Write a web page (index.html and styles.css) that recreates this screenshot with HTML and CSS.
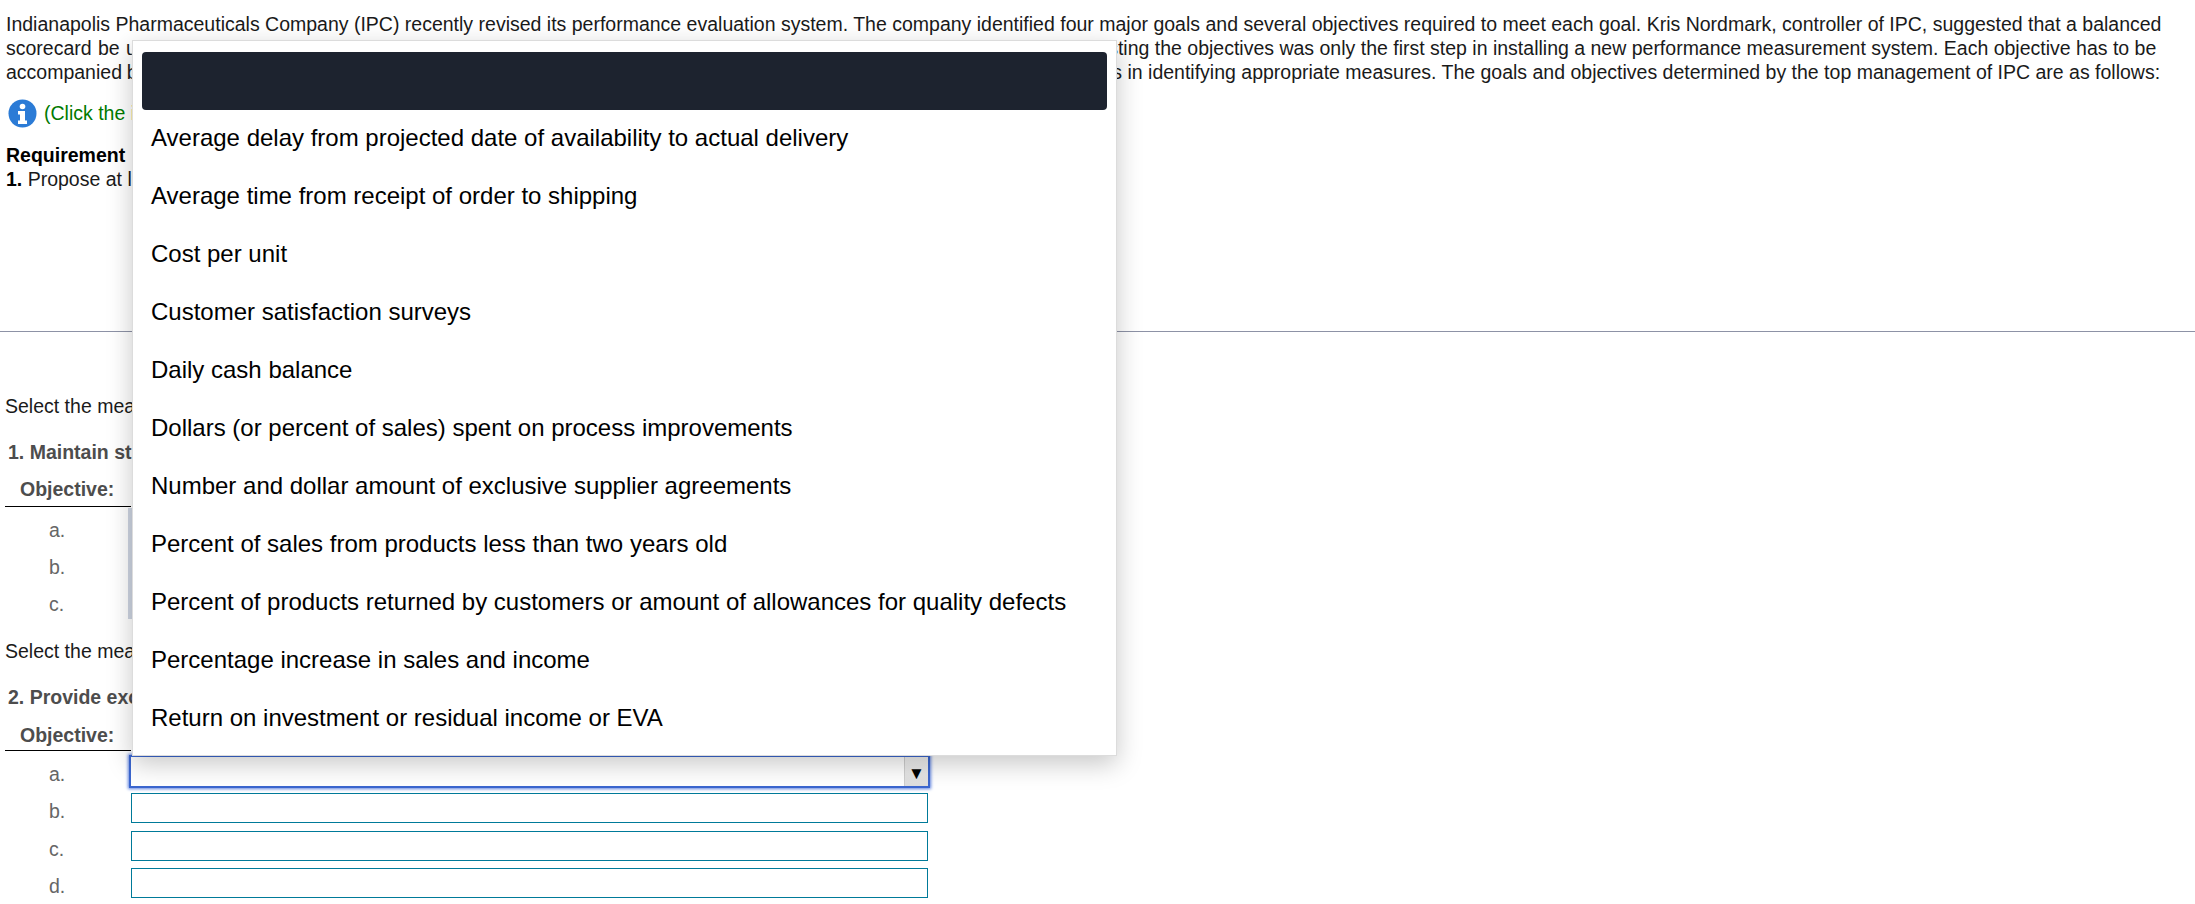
FILE: index.html
```html
<!DOCTYPE html>
<html lang="en">
<head>
<meta charset="utf-8">
<title>Balanced scorecard</title>
<link rel="stylesheet" href="styles.css">
</head>
<body>
<section class="question">
  <p class="intro">Indianapolis Pharmaceuticals Company (IPC) recently revised its performance evaluation system. The company identified four major goals and several objectives required to meet each goal. Kris Nordmark, controller of IPC, suggested that a balanced<br><span class="fit-wide">scorecard be used to report on top management's progress toward achieving the company's goals. He also emphasized that listing</span> the objectives was only the first step in installing a new performance measurement system. Each objective has to be<br><span class="fit-narrow">accompanied by one or more measures that should indicate whether each objective is being achieved. He asked staff to give ideas</span> in identifying appropriate measures. The goals and objectives determined by the top management of IPC are as follows:</p>
  <div class="hint">
    <svg class="info" viewBox="0 0 29 29" aria-hidden="true">
      <circle cx="14.5" cy="14.5" r="14" fill="#2b7bd6"/>
      <circle cx="14.5" cy="7.500" r="2.800" fill="#fff"/>
      <path d="M10 12h7v9.500h2V25H10v-3.500h2V15.500h-2z" fill="#fff"/>
    </svg>
    <span>(Click the icon to view the goals and objectives.)</span>
  </div>
  <p class="req"><b class="req-title">Requirement</b><br><b class="req-title">1.</b> Propose at least one measure for each objective.</p>
</section>
<hr class="rule">
<section class="answers">
  <p class="lead">Select the measures for each objective of the first goal.</p>
  <h3 class="goal">1. Maintain strong financial health</h3>
  <div class="head">Objective:</div>
  <div class="rows rows-first">
    <div class="row"><span class="letter">a.</span></div>
    <div class="row"><span class="letter">b.</span></div>
    <div class="row"><span class="letter">c.</span></div>
    <div class="muted-box"></div>
  </div>
  <p class="lead lead-second">Select the measures for each objective of the second goal.</p>
  <h3 class="goal">2. Provide excellent customer service</h3>
  <div class="head head-second">Objective:</div>
  <div class="rows-second">
    <div class="row row-focus"><span class="letter">a.</span>
      <div class="select"><span class="arrow">▼</span></div>
    </div>
    <div class="row row-b"><span class="letter">b.</span><div class="field"></div></div>
    <div class="row row-c"><span class="letter">c.</span><div class="field"></div></div>
    <div class="row row-d"><span class="letter">d.</span><div class="field"></div></div>
  </div>
</section>
<div class="menu">
  <div class="menu-head"></div>
  <ul class="menu-list">
    <li>Average delay from projected date of availability to actual delivery</li>
    <li>Average time from receipt of order to shipping</li>
    <li>Cost per unit</li>
    <li>Customer satisfaction surveys</li>
    <li>Daily cash balance</li>
    <li>Dollars (or percent of sales) spent on process improvements</li>
    <li>Number and dollar amount of exclusive supplier agreements</li>
    <li>Percent of sales from products less than two years old</li>
    <li>Percent of products returned by customers or amount of allowances for quality defects</li>
    <li>Percentage increase in sales and income</li>
    <li>Return on investment or residual income or EVA</li>
  </ul>
</div>
</body>
</html>
```
FILE: styles.css
```css
html, body { margin: 0; padding: 0; background: #fff; }
body {
  position: relative;
  height: 904px;
  overflow: hidden;
  font-family: "Liberation Sans", Arial, sans-serif;
  font-size: 19.5px;
  color: #1a1a1a;
}
p { margin: 0; }
.question { padding: 12px 0 0 6px; height: 331px; box-sizing: border-box; }
.intro { line-height: 24px; white-space: nowrap; }
.fit-wide { word-spacing: .9px; }
.fit-narrow { word-spacing: -.6px; }
.hint { display: flex; align-items: center; gap: 7px; margin-top: 15px; padding-left: 2px; color: #007a00; white-space: nowrap; }
.info { width: 29px; height: 29px; flex: none; }
.req { margin-top: 15px; line-height: 24px; }
.req-title { color: #000; }
.rule { margin: 0; border: 0; height: 1px; background: #8d92a6; }
.answers { padding: 62px 0 0 5px; }
.lead { line-height: 24px; }
.goal { margin: 22px 0 0 3px; font-size: 19.5px; line-height: 24px; color: #4d4d4d; font-weight: 700; }
.head { width: 126px; box-sizing: border-box; margin-top: 13px; padding: 0 0 5px 15px; line-height: 24px; font-weight: 700; color: #4d4d4d; border-bottom: 1px solid #000; white-space: nowrap; }
.head-second { margin-top: 14px; padding-bottom: 3px; }
.rows { position: relative; }
.rows-first { height: 113px; padding-top: 5px; box-sizing: border-box; }
.row { display: flex; align-items: center; height: 37px; }
.letter { width: 123px; padding-left: 44px; box-sizing: border-box; color: #666; flex: none; }
.muted-box { position: absolute; left: 123px; top: 1px; width: 800px; height: 111px; background: #ced5e2; }
.lead-second { margin-top: 19px; }
.rows-second { padding-top: 4px; width: 926px; }
.rows-second .letter { padding-top: 6px; }
.row-focus { height: 33px; }
.row-b { height: 30px; margin-top: 5px; }
.row-c { height: 30px; margin-top: 8px; }
.row-d { height: 30px; margin-top: 7px; }
.select { flex: 1; height: 33px; box-sizing: border-box; margin: 0 1px; border: 2px solid #3b66cf; box-shadow: 0 0 3px 1px #5f83e0; display: flex; justify-content: flex-end; }
.arrow { width: 24px; box-sizing: border-box; background: linear-gradient(#f2f2f2, #dedede); border-left: 1px solid #cfcfcf; font-size: 17px; line-height: 33px; text-align: center; color: #000; }
.field { flex: 1; height: 30px; box-sizing: border-box; margin: 0 3px; border: 1px solid #007a99; }
.menu {
  position: absolute;
  left: 132px; top: 40px;
  width: 985px; height: 716px;
  box-sizing: border-box;
  background: #fff;
  border: 1px solid #dcdcdc;
  box-shadow: 0 8px 24px rgba(0,0,0,.22);
  padding: 11px 9px 0 9px;
}
.menu-head { height: 58px; background: #1d232f; border-radius: 4px; }
.menu-list { list-style: none; margin: 0; padding: 0; }
.menu-list li { height: 58px; line-height: 56px; padding-left: 9px; font-size: 24px; color: #000; white-space: nowrap; }
```
